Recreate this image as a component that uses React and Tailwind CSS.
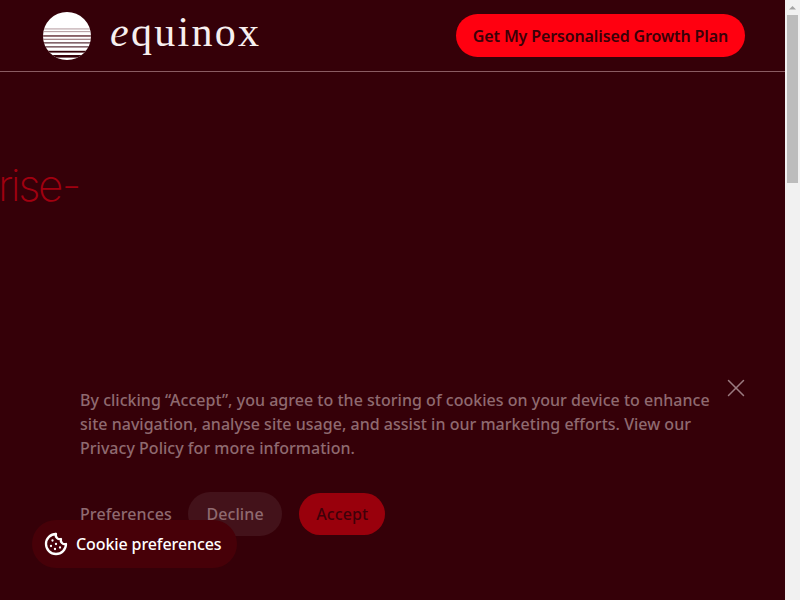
import React from "react";
import { Cookie, X } from "lucide-react";

const SANS = "font-['Noto_Sans',sans-serif]";

// y, height and colour of the bands cut through the lower half of the sun
const bands = [
  [16.6, 0.7, "#8f6a70"],
  [19.4, 0.7, "#8f6a70"],
  [23.2, 1.5, "#6b3a40"],
  [26.8, 0.8, "#6b3a40"],
  [30.4, 1, "#33000a"],
  [34.4, 1, "#33000a"],
  [38.8, 1.8, "#350008"],
  [43, 2.6, "#350008"],
];

const SunLogo = () => (
  <svg width="48" height="48" viewBox="0 0 48 48" aria-hidden="true">
    <defs>
      <clipPath id="sun">
        <circle cx="24" cy="24" r="24" />
      </clipPath>
    </defs>
    <g clipPath="url(#sun)">
      <rect width="48" height="48" fill="#ffffff" />
      {bands.map(([y, h, fill]) => (
        <rect key={y} x="0" y={y} width="48" height={h} fill={fill} />
      ))}
    </g>
  </svg>
);

const Header = () => (
  <header className="flex h-[72px] shrink-0 items-center justify-between border-b border-[#8a5c62] pl-[43px] pr-[40px]">
    <div className="flex items-center gap-[19px]">
      <SunLogo />
      <span className="mb-[7px] font-['Liberation_Serif',serif] text-[42px] leading-none tracking-[2.3px] text-[#f7efef]">
        <span className="italic">e</span>quinox
      </span>
    </div>
    <button className={`${SANS} h-[43px] rounded-full bg-[#ff0010] px-[17px] text-[16px] font-semibold tracking-[-0.13px] text-[#3a0008]`}>
      Get My Personalised Growth Plan
    </button>
  </header>
);

const CookieBanner = () => (
  <div className={`${SANS} absolute left-[80px] top-[376px] w-[656px] text-[#8f6a70]`}>
    <button className="absolute right-[-15px] top-[-3px] text-[#9a7a80]" aria-label="Close">
      <X size={30} strokeWidth={1.2} />
    </button>
    <p className="mt-[12px] w-[640px] text-[16px] font-medium leading-[24px] tracking-[0.02px]">
      By clicking “Accept”, you agree to the storing of cookies on your device to enhance site navigation, analyse site usage, and assist in our marketing efforts. View our Privacy Policy for more information.
    </p>
    <div className="mt-[32px] flex items-center text-[16px] font-medium tracking-[0.1px]">
      <span>Preferences</span>
      <button className="ml-[16px] h-[44px] rounded-full bg-[#43121a] px-[18.5px]">Decline</button>
      <button className="ml-[17px] h-[42px] rounded-full bg-[#99000c] px-[17px] text-[#3f0009]">Accept</button>
    </div>
  </div>
);

export default function App() {
  return (
    <div className="relative flex h-[600px] w-[800px] overflow-hidden bg-[#350008]">
      <div className="flex w-[785px] flex-col">
        <Header />
        <main className="relative flex-1 overflow-hidden">
          <p className="ml-[-2px] mt-[91px] whitespace-nowrap font-['Inter',sans-serif] text-[44px] font-extralight leading-none tracking-[-2.5px] text-[#a10010]">
            rise<span className="ml-[1px] tracking-normal">-</span>
          </p>
        </main>
      </div>

      <div className="flex w-[15px] flex-col items-center bg-[#f1f1f1]">
        <svg width="15" height="15" viewBox="0 0 15 15" aria-hidden="true">
          <path d="M4 9.5 L7.5 6 L11 9.5 Z" fill="#a3a3a3" />
        </svg>
        <div className="h-[168px] w-[11px] bg-[#bcbcbc]" />
      </div>

      <CookieBanner />

      <div className={`${SANS} absolute left-[32px] top-[520px] flex h-[48px] items-center gap-[8px] rounded-full bg-[#470008] pl-[12px] pr-[16px] text-[16px] font-medium tracking-[-0.1px] text-white`}>
        <Cookie size={24} strokeWidth={2.3} />
        Cookie preferences
      </div>
    </div>
  );
}
